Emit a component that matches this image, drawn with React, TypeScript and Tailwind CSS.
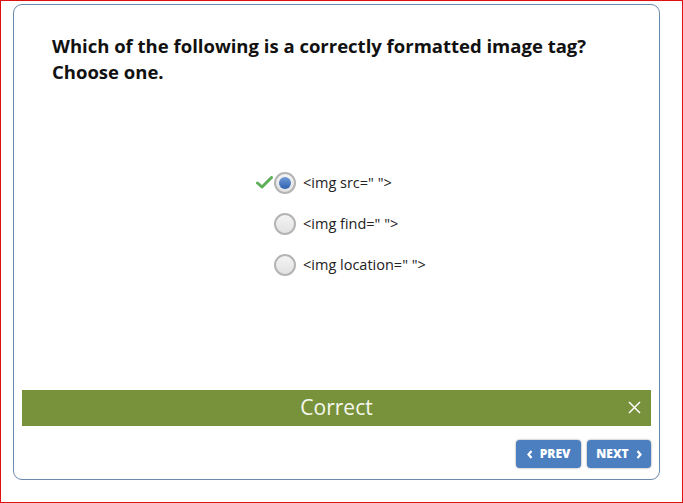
import React from "react";

function Radio({ checked }: { checked?: boolean }) {
  return (
    <div className="w-[22px] h-[22px] rounded-full border-2 border-[#b4b4b4] bg-gradient-to-b from-[#f4f4f4] to-[#e2e2e2] flex items-center justify-center shrink-0">
      {checked && (
        <div className="w-[12px] h-[12px] rounded-full bg-gradient-to-b from-[#6f9ad6] to-[#2f62b0]" />
      )}
    </div>
  );
}

function Check() {
  return (
    <svg width="17" height="13" viewBox="0 0 17 13">
      <path d="M1.5 7 L6 11 L15.5 1.5" fill="none" stroke="#5fae5a" strokeWidth="3" strokeLinecap="round" strokeLinejoin="round" />
    </svg>
  );
}

function Chevron({ dir }: { dir: "left" | "right" }) {
  return (
    <svg width="6" height="9" viewBox="0 0 6 9">
      <path d={dir === "left" ? "M4.5 1 L1.5 4.5 L4.5 8" : "M1.5 1 L4.5 4.5 L1.5 8"} fill="none" stroke="white" strokeWidth="2.2" />
    </svg>
  );
}

export default function App() {
  const options = ['<img src=" ">', '<img find=" ">', '<img location=" ">'];
  return (
    <div className="w-[683px] h-[503px] border border-[#e01010] bg-white relative" style={{ fontFamily: '"Open Sans", sans-serif' }}>
      <div className="ml-[12px] mt-[3px] w-[647px] h-[476px] border border-[#6b88ad] rounded-[9px] flex flex-col">
        <div className="pt-[28px] pl-[38px] text-[18.5px] leading-[26px] font-bold text-[#111]">
          Which of the following is a correctly formatted image tag?
          <br />
          Choose one.
        </div>
        <div className="mt-[77px] flex flex-col items-center pl-[20px]">
          {options.map((o, i) => (
            <div key={i} className="h-[41px] flex items-center">
              <div className="w-[18px] flex items-center justify-start">{i === 0 && <Check />}</div>
              <Radio checked={i === 0} />
              <span className="ml-[7px] w-[134px] text-[14.5px] text-[#222]">{o}</span>
            </div>
          ))}
        </div>
        <div className="flex-1" />
        <div className="mx-[8px] h-[36px] bg-[#78923c] flex items-center justify-center relative">
          <span className="text-[#f6f8ee] text-[21px] font-normal">Correct</span>
          <svg className="absolute right-[10px] top-[11px]" width="13" height="13" viewBox="0 0 13 13">
            <path d="M1 1 L12 12 M12 1 L1 12" stroke="white" strokeWidth="1.5" />
          </svg>
        </div>
        <div className="mx-[8px] mt-[14px] mb-[11px] flex justify-end gap-[6px]">
          <button className="h-[28px] w-[65px] rounded-[4px] bg-[#4b7fc0] shadow-[0_0_2px_rgba(0,0,0,0.5)] text-white text-[12px] font-extrabold flex items-center justify-center gap-[7px]">
            <Chevron dir="left" />PREV
          </button>
          <button className="h-[28px] w-[64px] rounded-[4px] bg-[#4b7fc0] shadow-[0_0_2px_rgba(0,0,0,0.5)] text-white text-[12px] font-extrabold flex items-center justify-center gap-[7px]">
            NEXT<Chevron dir="right" />
          </button>
        </div>
      </div>
    </div>
  );
}
